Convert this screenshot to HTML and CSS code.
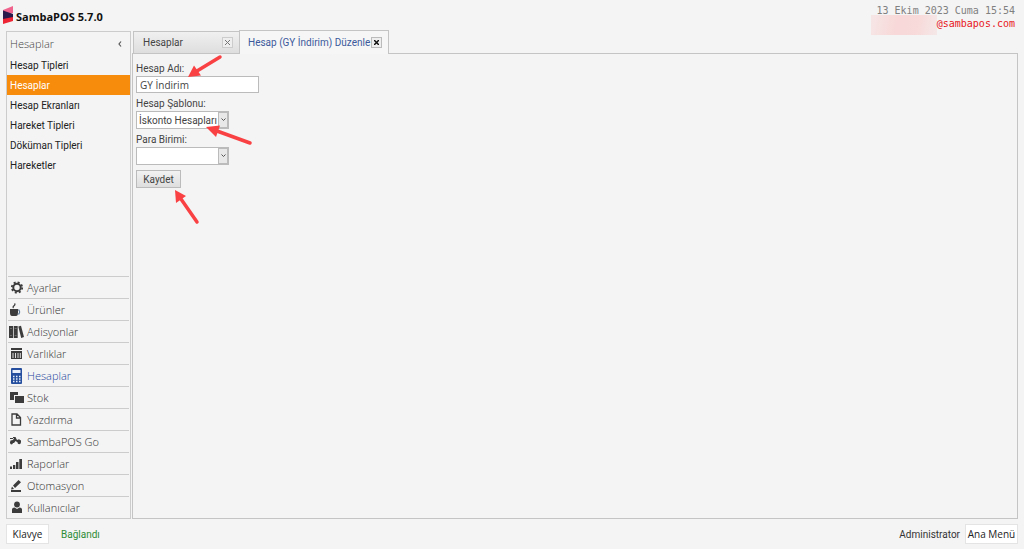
FILE: index.html
```html
<!DOCTYPE html>
<html lang="tr">
<head>
    <meta charset="UTF-8">
    <meta name="viewport" content="width=device-width, initial-scale=1.0">
    <title>SambaPOS 5.7.0</title>
    <link rel="stylesheet" href="styles.css">
</head>
<body>

<header class="top-bar">
    <div class="brand">
        <svg class="logo" width="11" height="19" viewBox="0 0 11 19">
            <path d="M0 4 10 0v7L0 10z" fill="#f0638c"/>
            <path d="M0 12 10 8v7L0 18z" fill="#ed2433"/>
            <path d="M0 4.500 10 8v3L0 13z" fill="#2a1a4c"/>
        </svg>
        <h1>SambaPOS 5.7.0</h1>
    </div>
    <div class="session">
        <div class="date">13 Ekim 2023 Cuma 15:54</div>
        <div class="mail"><span class="mail-mask"></span>@sambapos.com</div>
    </div>
</header>

<div class="workspace">
    <aside class="sidebar">
        <div class="sidebar-title">
            <h2>Hesaplar</h2>
            <button class="collapse-btn" aria-label="Daralt">
                <svg width="4" height="6" viewBox="0 0 4 6"><path d="M3 .5 1 3l2 2.500" fill="none" stroke="#555" stroke-width="1.200"/></svg>
            </button>
        </div>

        <ul class="sub-menu">
            <li><a href="#">Hesap Tipleri</a></li>
            <li><a href="#" class="selected">Hesaplar</a></li>
            <li><a href="#">Hesap Ekranları</a></li>
            <li><a href="#">Hareket Tipleri</a></li>
            <li><a href="#">Döküman Tipleri</a></li>
            <li><a href="#">Hareketler</a></li>
        </ul>

        <!-- Modules -->
        <nav class="modules">
            <a href="#">
                <svg viewBox="0 0 16 16"><circle cx="9" cy="7.500" r="3.700" fill="none" stroke="currentColor" stroke-width="2"/><circle cx="9" cy="7.500" r="5.200" fill="none" stroke="currentColor" stroke-width="1.800" stroke-dasharray="2.050 2.034"/></svg>
                <span>Ayarlar</span>
            </a>
            <a href="#">
                <svg viewBox="0 0 16 16"><path d="M2 7h8v4q0 3-2 3H4q-2 0-2-3z" fill="currentColor"/><path d="M10 8h1q1.500 2 0 4H9.500" fill="none" stroke="#5c7896" stroke-width="1.200"/><path d="M5.500 6q-1-1 .5-2.200T6.500 1.500" fill="none" stroke="currentColor" stroke-width="1.300"/></svg>
                <span>Ürünler</span>
            </a>
            <a href="#">
                <svg viewBox="0 0 16 16"><path d="M1 2h4v12H1zM5.700 2h4v12h-4zM10.300 2.500l2.700-.7L16 13l-2.800 1z" fill="currentColor"/><path d="M2 4.500h2M2 11.500h2M6.700 4.500h2M6.700 11.500h2" stroke="#777" stroke-width=".8"/></svg>
                <span>Adisyonlar</span>
            </a>
            <a href="#">
                <svg viewBox="0 0 16 16"><path d="M3 2h11v2H3zM3 5h11v8H3z" fill="currentColor"/><path d="M5 7v5M7.500 7v5M10 7v5M12.300 7v5" stroke="#ddd"/></svg>
                <span>Varlıklar</span>
            </a>
            <a href="#" class="active">
                <svg viewBox="0 0 16 16"><rect x="3" y="0" width="11" height="16" rx="1" fill="#254f9e"/><path d="M4.500 2h8v3h-8z" fill="#e8eefa"/><path d="M5 8.500h7.500M5 11h7.500M5 13.500h7.500" stroke="#e8eefa" stroke-width="1.500" stroke-dasharray="1.500"/></svg>
                <span>Hesaplar</span>
            </a>
            <a href="#">
                <svg viewBox="0 0 16 16"><path d="M2 2h8v3H6v5H2zM7 6h9v7H7z" fill="currentColor"/></svg>
                <span>Stok</span>
            </a>
            <a href="#">
                <svg viewBox="0 0 16 16"><path d="M4 2h5l3.500 3.500V13H4zM8.500 2v4h4" fill="none" stroke="currentColor" stroke-width="1.300"/></svg>
                <span>Yazdırma</span>
            </a>
            <a href="#">
                <svg viewBox="0 0 16 16"><path d="M5 3h2.500L9 6l2-.8 2 1.300V8H9L7.500 7 6 9H2l.5-2.500L5 6l1-2H5z" fill="currentColor"/><path d="M2 4.500h3" stroke="currentColor"/><circle cx="3.500" cy="9" r="1.400" fill="currentColor"/><circle cx="11.200" cy="8.500" r="1.700" fill="currentColor"/></svg>
                <span>SambaPOS Go</span>
            </a>
            <a href="#">
                <svg viewBox="0 0 16 16"><path d="M2 10.500h2V13H2zM5 9h2.300v4H5zM8 6h2.500v7H8zM11.300 3H14v10h-2.700z" fill="currentColor"/></svg>
                <span>Raporlar</span>
            </a>
            <a href="#">
                <svg viewBox="0 0 16 16"><path d="M3 12h10v2H3zM4 8.500 6 11l-3 .5zM5 7.500 10.500 2 13 4.200 7 10z" fill="currentColor"/></svg>
                <span>Otomasyon</span>
            </a>
            <a href="#">
                <svg viewBox="0 0 16 16"><circle cx="9" cy="4.500" r="2.900" fill="currentColor"/><path d="M4 13V9.500q0-2 2.500-2L9 9l2.500-1.500q2.500 0 2.500 2V13z" fill="currentColor"/></svg>
                <span>Kullanıcılar</span>
            </a>
        </nav>
    </aside>

    <main class="main">
        <div class="tabs">
            <div class="tab">
                <span>Hesaplar</span>
                <button class="close-btn" aria-label="Kapat"><svg width="5" height="5" viewBox="0 0 5 5"><path d="M0 0l5 5M5 0 0 5" stroke="currentColor"/></svg></button>
            </div>
            <div class="tab current">
                <span>Hesap (GY İndirim) Düzenle</span>
                <button class="close-btn" aria-label="Kapat"><svg width="5" height="5" viewBox="0 0 5 5"><path d="M0 0l5 5M5 0 0 5" stroke="currentColor" stroke-width="1.500"/></svg></button>
            </div>
        </div>

        <form class="panel">
            <label for="account-name">Hesap Adı:</label>
            <input type="text" id="account-name" value="GY İndirim">

            <label for="account-template">Hesap Şablonu:</label>
            <div class="select-box">
                <select id="account-template">
                    <option>İskonto Hesapları</option>
                </select>
                <span class="arrow-btn"><svg width="5" height="4" viewBox="0 0 5 4"><path d="M.5.5l2 2 2-2" fill="none" stroke="#555"/></svg></span>
            </div>

            <label for="currency">Para Birimi:</label>
            <div class="select-box">
                <select id="currency">
                    <option></option>
                </select>
                <span class="arrow-btn"><svg width="5" height="4" viewBox="0 0 5 4"><path d="M.5.5l2 2 2-2" fill="none" stroke="#555"/></svg></span>
            </div>

            <button type="button" class="save-btn">Kaydet</button>

            <!-- Pointer arrows over the form -->
            <svg class="pointers" width="130" height="180" viewBox="0 0 130 180">
                <g fill="#f94144" stroke="#f94144">
                    <path d="M87 3 64 17" stroke-width="3.500" stroke-linecap="round"/>
                    <path d="M55 23 61 11.500 68 21.500z" stroke="none"/>
                    <path d="M117 89 84 77" stroke-width="3.500" stroke-linecap="round"/>
                    <path d="M73 73 87 71.500 83 83z" stroke="none"/>
                    <path d="M64 168 48 145" stroke-width="3.500" stroke-linecap="round"/>
                    <path d="M42 136 53 142 43 149z" stroke="none"/>
                </g>
            </svg>
        </form>
    </main>
</div>

<footer class="status-bar">
    <button class="flat-btn">Klavye</button>
    <span class="connection">Bağlandı</span>
    <span class="user">Administrator</span>
    <button class="flat-btn menu-btn">Ana Menü</button>
</footer>

</body>
</html>
```

FILE: styles.css
```css
* {
    box-sizing: border-box;
}

body {
    display: flex;
    flex-direction: column;
    min-height: 100vh;
    margin: 0;
    background-color: #f4f4f4;
    color: #444;
    font-family: Roboto, "Open Sans", sans-serif;
    font-size: 10px;
    line-height: 15px;
}

button, input, select {
    margin: 0;
    padding: 0;
    font: inherit;
    color: inherit;
    border-radius: 0;
}

a {
    color: inherit;
    text-decoration: none;
}

/* Header */
.top-bar {
    display: flex;
    justify-content: space-between;
    height: 30px;
    padding: 4px 9px 0 3px;
}

.brand {
    display: flex;
    align-items: flex-start;
    gap: 2px;
}

.logo {
    margin-top: 2px;
}

h1 {
    margin: 5px 0 0;
    color: #111;
    font-family: "Open Sans", sans-serif;
    font-size: 11px;
    line-height: 16px;
    font-weight: 700;
}

.session {
    color: #808080;
    font-family: "DejaVu Sans Mono", monospace;
    font-size: 10px;
    line-height: 13px;
    text-align: right;
}

.mail {
    display: flex;
    justify-content: flex-end;
    color: #e8161c;
}

.mail-mask {
    width: 66px;
    height: 20px;
    margin-top: -2px;
    background: linear-gradient(100deg, #f6e6e6, #f8d8d8 40%, #f8dada 70%, #f5e8e8);
}

/* Layout */
.workspace {
    display: flex;
    flex: 1;
    gap: 1px;
    padding: 0 6px;
}

.sidebar {
    display: flex;
    flex-direction: column;
    width: 125px;
    margin-top: 1px;
    border: 1px solid #ccc;
}

.sidebar-title {
    display: flex;
    align-items: center;
    justify-content: space-between;
    height: 23px;
    padding: 0 8px 0 3px;
}

h2 {
    margin: 0;
    color: #444;
    font-family: "Open Sans", sans-serif;
    font-size: 11px;
    font-weight: 300;
}

.collapse-btn {
    display: flex;
    border: none;
    background: none;
}

.sub-menu {
    margin: 0;
    padding: 0;
    color: #222;
    list-style: none;
}

.sub-menu a {
    display: block;
    padding: 1px 3px 0;
    line-height: 19px;
}

.sub-menu .selected {
    background-color: #f78b0c;
    color: #fff;
}

.modules {
    margin-top: auto;
    padding: 0 1px;
    color: #3c3c3c;
}

.modules a {
    display: flex;
    align-items: center;
    gap: 3px;
    height: 22px;
    border-top: 1px solid #ccc;
}

.modules svg {
    width: 16px;
    height: 16px;
}

.modules span {
    color: #333;
    font-family: "Open Sans", sans-serif;
    font-size: 11px;
    font-weight: 300;
    line-height: 14px;
}

.modules .active span {
    color: #1c449c;
}

/* Tabs */
.main {
    display: flex;
    flex: 1;
    flex-direction: column;
}

.tabs {
    display: flex;
    align-items: flex-end;
    height: 24px;
    padding-left: 1px;
}

.tab {
    display: flex;
    align-items: center;
    justify-content: space-between;
    width: 106px;
    height: 23px;
    padding: 0 6px 0 9px;
    border: 1px solid #c4c4c4;
    border-right: none;
    background: linear-gradient(#f0f0f0, #dedede);
    white-space: nowrap;
}

.tab.current {
    z-index: 1;
    width: 150px;
    height: 24px;
    padding-left: 8px;
    border-right: 1px solid #c4c4c4;
    border-bottom: none;
    background: #f6f6f6;
    color: #3c5a9c;
}

.close-btn {
    display: flex;
    align-items: center;
    justify-content: center;
    width: 11px;
    height: 11px;
    border: 1px solid #ccc;
    background-color: #eee;
    color: #777;
}

.current .close-btn {
    border-color: #bbb;
    color: #111;
}

/* Form */
.panel {
    position: relative;
    display: flex;
    flex: 1;
    flex-direction: column;
    align-items: flex-start;
    margin-top: -1px;
    padding: 7px 3px;
    border: 1px solid #c4c4c4;
}

input[type="text"], select {
    border: 1px solid #bbb;
    background-color: #fff;
}

input[type="text"] {
    width: 123px;
    height: 17px;
    margin-bottom: 3px;
    padding: 0 3px;
    font-family: "Open Sans", sans-serif;
}

.select-box {
    position: relative;
    margin-bottom: 3px;
}

select {
    display: block;
    width: 93px;
    height: 18px;
    padding: 0 2px;
    appearance: none;
}

.arrow-btn {
    position: absolute;
    top: 1px;
    right: 1px;
    bottom: 1px;
    display: flex;
    align-items: center;
    justify-content: center;
    width: 10px;
    border: 1px solid #bbb;
    background-color: #e8e8e8;
    pointer-events: none;
}

.save-btn {
    width: 45px;
    height: 18px;
    margin-top: 2px;
    border: 1px solid #bbb;
    background: linear-gradient(#f2f2f2, #dedede);
}

.pointers {
    position: absolute;
    top: 0;
    left: 0;
    pointer-events: none;
}

/* Footer */
.status-bar {
    display: flex;
    align-items: center;
    height: 30px;
    padding: 0 6px;
    color: #333;
}

.flat-btn {
    width: 43px;
    height: 20px;
    border: 1px solid #e4e4e4;
    background-color: #fff;
    color: #222;
    font-family: "Open Sans", sans-serif;
}

.menu-btn {
    width: 53px;
}

.connection {
    margin-left: 12px;
    color: #2c8c34;
}

.user {
    margin: 0 5px 0 auto;
}
```
